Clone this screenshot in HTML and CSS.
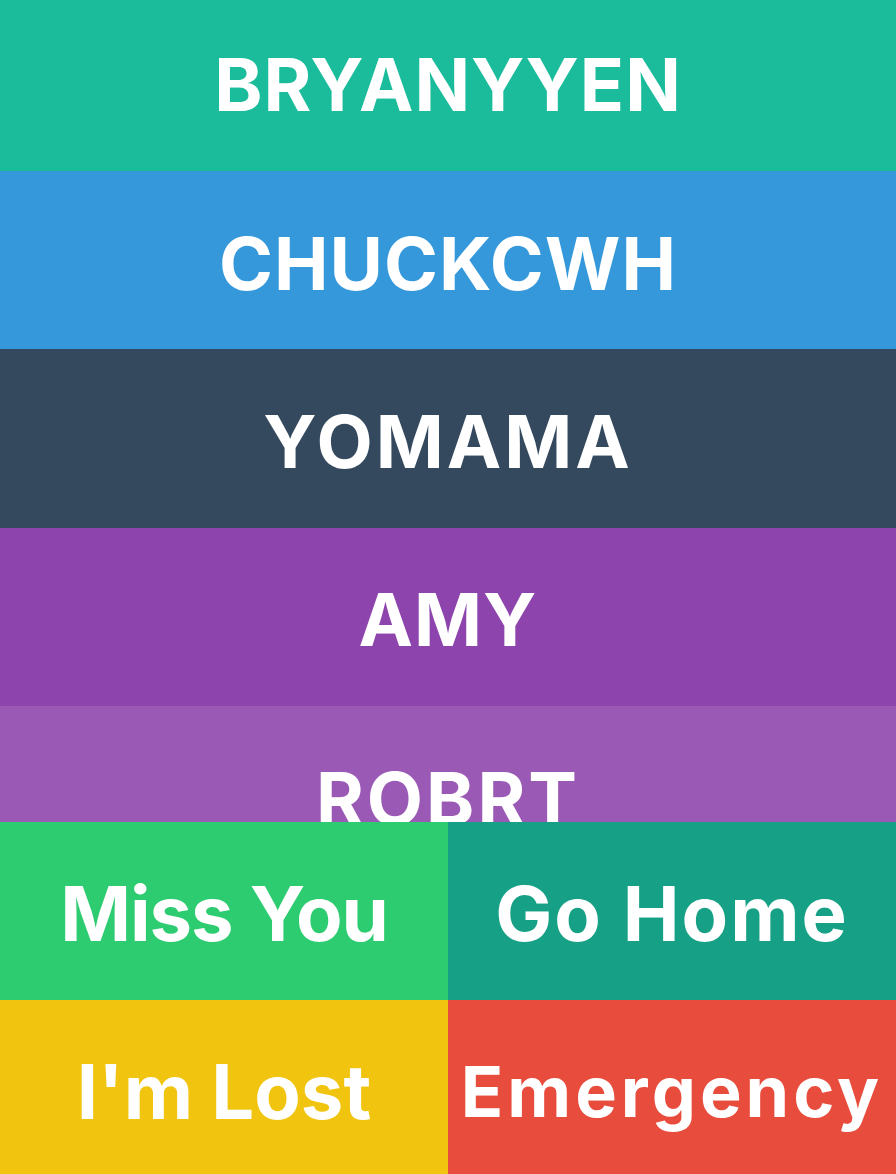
FILE: index.html
```html
<!DOCTYPE html>
<html lang="en">
<head>
<meta charset="utf-8">
<title>Friends</title>
<link rel="stylesheet" href="styles.css">
</head>
<body>
<main class="app">
  <ul class="friends">
    <li class="friend friend--turquoise">BRYANYYEN</li>
    <li class="friend friend--blue">CHUCKCWH</li>
    <li class="friend friend--navy friend--spaced">YOMAMA</li>
    <li class="friend friend--purple">AMY</li>
    <li class="friend friend--violet friend--spaced">ROBRT</li>
    <li class="friend friend--violet">JESS</li>
  </ul>
  <nav class="actions">
    <button class="action action--green">Miss You</button>
    <button class="action action--teal action--spaced">Go Home</button>
    <button class="action action--yellow action--loose">I'm Lost</button>
    <button class="action action--red action--long">Emergency</button>
  </nav>
</main>
</body>
</html>
```

FILE: styles.css
```css
html, body {
  margin: 0;
  padding: 0;
  height: 100%;
  overflow: hidden;
}

body {
  font-family: Inter, "Liberation Sans", sans-serif;
  font-weight: 700;
  color: #ffffff;
}

.app {
  position: relative;
  height: 100%;
  overflow: hidden;
}

.friends {
  list-style: none;
  margin: -7.3px 0 0;
  padding: 0;
  display: flex;
  flex-direction: column;
}

.friend {
  height: 178.33px;
  flex: none;
  display: flex;
  align-items: center;
  justify-content: center;
  box-sizing: border-box;
  padding-top: 6px;
  font-size: 73px;
  letter-spacing: 1px;
  line-height: 1;
}

.friend--spaced {
  letter-spacing: 3px;
}

.friend--turquoise { background: #1abc9c; }
.friend--blue { background: #3498db; }
.friend--navy { background: #34495e; }
.friend--purple { background: #8e44ad; }
.friend--violet { background: #9b59b6; }

.actions {
  position: absolute;
  left: 0;
  right: 0;
  bottom: 0;
  display: grid;
  grid-template-columns: 1fr 1fr;
  grid-template-rows: 178px 174px;
}

.action {
  border: 0;
  margin: 0;
  padding: 4px 0 0;
  font: inherit;
  color: #ffffff;
  font-size: 76px;
  letter-spacing: -1px;
  line-height: 1;
  display: flex;
  align-items: center;
  justify-content: center;
  white-space: nowrap;
  overflow: hidden;
}

.action--spaced {
  letter-spacing: 2px;
}

.action--loose {
  letter-spacing: 0;
  padding-top: 8px;
}

.action--long {
  font-size: 70px;
  letter-spacing: 4px;
  padding-top: 10px;
}

.action--green { background: #2ecc71; }
.action--teal { background: #16a085; }
.action--yellow { background: #f1c40f; }
.action--red { background: #e74c3c; }
```
